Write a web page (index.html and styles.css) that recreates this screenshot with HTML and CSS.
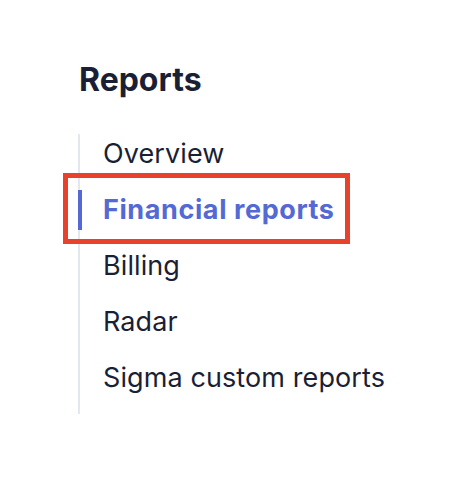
FILE: index.html
```html
<!DOCTYPE html>
<html lang="en">
<head>
<meta charset="utf-8">
<title>Reports</title>
<link rel="stylesheet" href="styles.css">
</head>
<body>
<div class="page">
  <h2 class="title">Reports</h2>
  <ul class="nav">
    <li class="item">Overview</li>
    <li class="item active">Financial reports<span class="highlight"></span></li>
    <li class="item">Billing</li>
    <li class="item">Radar</li>
    <li class="item">Sigma custom reports</li>
  </ul>
</div>
</body>
</html>
```
FILE: styles.css
```css
html, body {
  margin: 0;
  padding: 0;
  background: #ffffff;
}
.page {
  padding: 60px 0 0 79px;
  font-family: Inter, "Noto Sans", sans-serif;
}
.title {
  margin: 0;
  font-size: 32px;
  line-height: 40px;
  font-weight: 700;
  color: #1a1f36;
}
.nav {
  list-style: none;
  margin: 34px 0 0 -1px;
  padding: 0 0 16px 0;
  border-left: 2px solid #e3e8ee;
  width: 320px;
  display: flex;
  flex-direction: column;
  gap: 16px;
}
.item {
  position: relative;
  height: 40px;
  line-height: 40px;
  padding-left: 23px;
  font-size: 27px;
  color: #1a1f36;
  white-space: nowrap;
  letter-spacing: 0.1px;
}
.item.active {
  color: #5469d4;
  font-weight: 700;
  letter-spacing: 0.6px;
}
.item.active::before {
  content: "";
  position: absolute;
  left: -2px;
  top: 0;
  width: 4px;
  height: 40px;
  background: #5469d4;
}
.highlight {
  position: absolute;
  left: -17px;
  top: -17px;
  width: 287px;
  height: 71px;
  box-sizing: border-box;
  border: 5px solid #e8412c;
}
```
